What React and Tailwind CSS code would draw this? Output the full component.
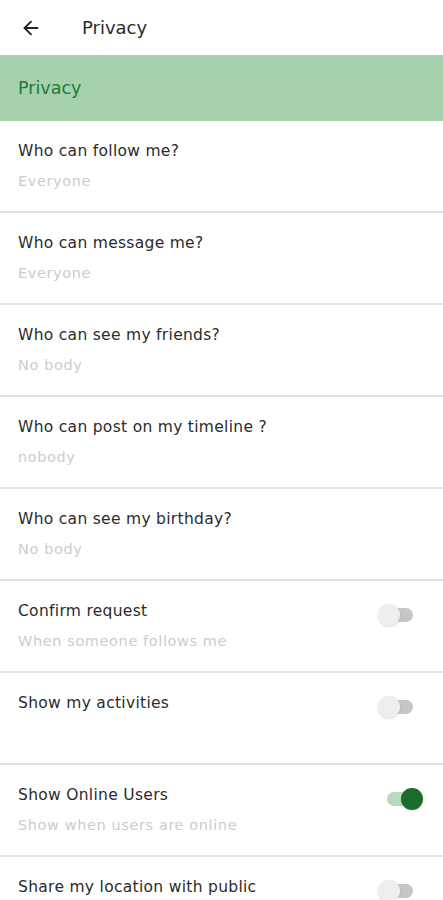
import { ArrowLeft } from 'lucide-react';

const ROWS = [
  { title: 'Who can follow me?', sub: 'Everyone' },
  { title: 'Who can message me?', sub: 'Everyone' },
  { title: 'Who can see my friends?', sub: 'No body' },
  { title: 'Who can post on my timeline ?', sub: 'nobody' },
  { title: 'Who can see my birthday?', sub: 'No body' },
  { title: 'Confirm request', sub: 'When someone follows me', toggle: false },
  { title: 'Show my activities', sub: '', toggle: false },
  { title: 'Show Online Users', sub: 'Show when users are online', toggle: true },
  { title: 'Share my location with public', sub: '', toggle: false },
];

function Toggle({ on }) {
  return (
    <div className="relative h-[22px] w-[45px]">
      <div className={`absolute left-[9px] top-[4px] h-[14px] w-[26px] rounded-full ${on ? 'bg-[#b9d9be]' : 'bg-[#c6c6c6]'}`} />
      {on ? (
        <div className="absolute right-0 top-0 h-[22px] w-[22px] rounded-full bg-[#1b6b2b] shadow" />
      ) : (
        <div className="absolute left-0 top-0 h-[22px] w-[22px] rounded-full bg-[#eeeeee] shadow" />
      )}
    </div>
  );
}

export default function App() {
  return (
    <div className="min-h-screen bg-white font-['DejaVu_Sans',sans-serif] text-[#2b2b2b]">
      <div className="flex h-[55px] items-center px-[20px]">
        <ArrowLeft size={22} strokeWidth={2} className="text-[#222]" />
        <span className="ml-[40px] text-[18px]">Privacy</span>
      </div>
      <div className="flex h-[66px] items-center bg-[#a6d1ad] px-[18px]">
        <span className="text-[17.5px] text-[#1e7b36]">Privacy</span>
      </div>
      {ROWS.map((r) => (
        <div key={r.title} className="flex h-[92px] items-start border-b-2 border-[#dbe8df] px-[18px] pt-[20px]">
          <div className="flex-1">
            <div className="text-[15.5px] leading-[20px] tracking-[0.3px]">{r.title}</div>
            <div className="mt-[10px] text-[14.5px] leading-[20px] tracking-[0.6px] text-[#cccccc]">{r.sub}</div>
          </div>
          {r.toggle !== undefined && (
            <div className="mr-[2px] mt-[3px]">
              <Toggle on={r.toggle} />
            </div>
          )}
        </div>
      ))}
    </div>
  );
}
